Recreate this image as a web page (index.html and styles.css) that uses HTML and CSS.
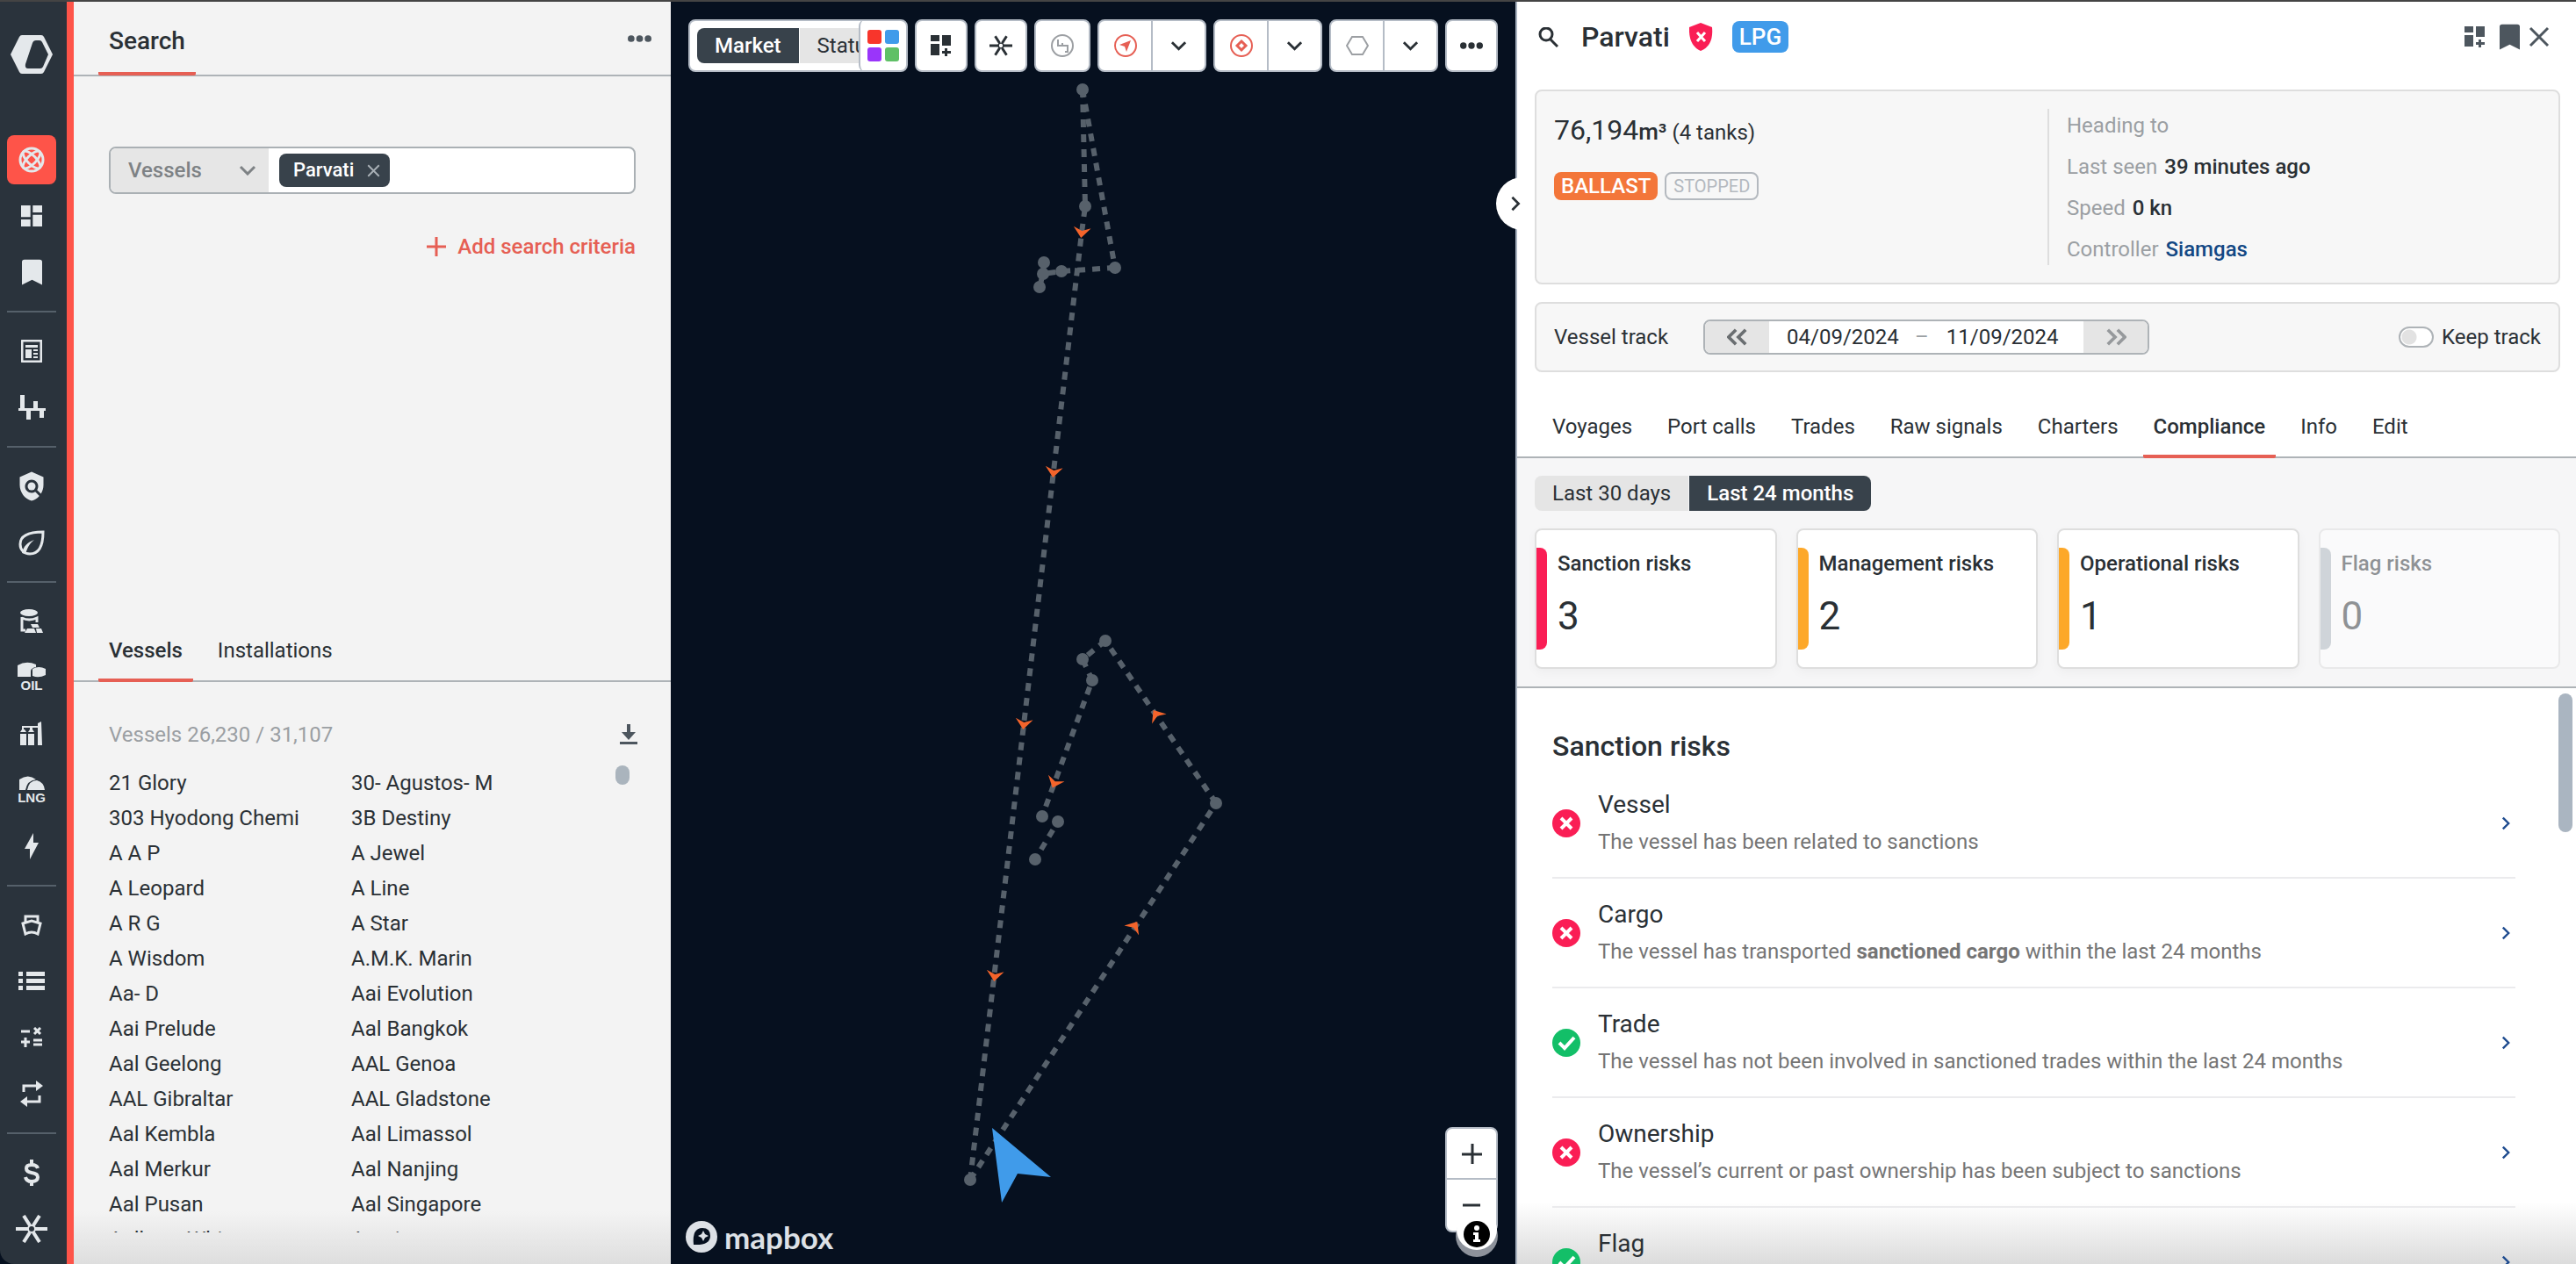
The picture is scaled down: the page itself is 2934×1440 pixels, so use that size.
FILE: index.html
```html
<!DOCTYPE html>
<html lang="en">
<head>
    <meta charset="UTF-8">
    <meta name="viewport" content="width=device-width, initial-scale=1.0">
    <title>Parvati - Compliance</title>
    <link rel="stylesheet" href="styles.css">
</head>
<body>
    <svg class="sprite" aria-hidden="true">
        <symbol id="bookmark" viewBox="0 0 24 30"><path d="M3 0h18a3 3 0 0 1 3 3v27l-12-6-12 6V3a3 3 0 0 1 3-3z"/></symbol>
        <symbol id="grid-plus" viewBox="0 0 24 24"><path d="M0 0h10v7H0zM0 10h10v13H0zM13 0h10v12H13zM16 15h3v3h4v3h-4v3h-3v-3h-3v-3h3z"/></symbol>
        <symbol id="spark" viewBox="0 0 36 32"><path d="M0 16h14M22 16h14M9 1l7 11M27 1l-7 11M9 31l7-11M27 31l-7-11" fill="none" stroke="currentColor" stroke-width="4"/><circle cx="18" cy="16" r="4" fill="none" stroke="currentColor" stroke-width="2"/></symbol>
        <symbol id="chevron-down" viewBox="0 0 20 12"><path d="M2 2l8 8 8-8" fill="none" stroke="currentColor" stroke-width="3"/></symbol>
        <symbol id="chevron-right" viewBox="0 0 12 20"><path d="M2 2l8 8-8 8" fill="none" stroke="currentColor" stroke-width="3"/></symbol>
        <symbol id="chevrons" viewBox="0 0 26 20"><path d="M11 1l-9 9 9 9M23 1l-9 9 9 9" fill="none" stroke="currentColor" stroke-width="4"/></symbol>
        <symbol id="cross" viewBox="0 0 24 24"><path d="M2 2l20 20M22 2L2 22" fill="none" stroke="currentColor" stroke-width="3"/></symbol>
        <symbol id="dots" viewBox="0 0 28 8"><circle cx="4" cy="4" r="4"/><circle cx="14" cy="4" r="4"/><circle cx="24" cy="4" r="4"/></symbol>
        <symbol id="bad" viewBox="0 0 32 32"><circle cx="16" cy="16" r="16" fill="#fa1e55"/><path d="M10 10l12 12M22 10L10 22" stroke="#fff" stroke-width="4"/></symbol>
        <symbol id="good" viewBox="0 0 32 32"><circle cx="16" cy="16" r="16" fill="#13bf68"/><path d="M8 16l6 6L25 10" fill="none" stroke="#fff" stroke-width="4"/></symbol>
        <symbol id="heading" viewBox="-10 -10 20 20"><path d="M-10-6L0 6 10-6 0-2z" fill="#f4642b"/></symbol>
    </svg>

    <div class="app">
        <nav class="rail">
            <a class="logo" href="#" aria-label="Home">
                <svg width="48" height="44" viewBox="0 0 48 44"><path fill-rule="evenodd" d="M13 0h22q2 0 3 2l10 20-10 20q-1 2-3 2H13q-2 0-3-2L0 22 10 2q1-2 3-2zM29 6q-3 0-4 3L17 33q-1 5 3 5h14q2 0 3-2l6-14-7-14q-1-2-3-2z"/></svg>
            </a>
            <button class="rail-btn active" aria-label="Map"><svg width="30" height="30" viewBox="-15 -15 30 30"><g fill="none" stroke="currentColor" stroke-width="3"><circle r="13"/><ellipse rx="13" ry="5" transform="rotate(45)"/><ellipse rx="13" ry="5" transform="rotate(-45)"/></g></svg></button>
            <button class="rail-btn" aria-label="Dashboards"><svg width="32" height="32" viewBox="0 0 24 24"><path d="M3 13h8V3H3v10zm0 8h8v-6H3v6zm10 0h8V11h-8v10zm0-18v6h8V3h-8z"/></svg></button>
            <button class="rail-btn" aria-label="Saved"><svg width="23" height="30"><use href="#bookmark"/></svg></button>
            <hr>
            <button class="rail-btn" aria-label="News"><svg width="24" height="26" viewBox="0 0 24 26"><rect x="1" y="1" width="22" height="24" rx="1" fill="none" stroke="currentColor" stroke-width="3"/><path d="M5 6h14v3H5zM5 11h7v10H5zM14 11h5v2h-5zM14 15h5v2h-5zM14 19h5v2h-5z"/></svg></button>
            <button class="rail-btn" aria-label="Balances"><svg width="31" height="28" viewBox="0 0 31 28"><path d="M2 0h5v15h10V7h5v8h9v3h-2v8h-5v-8H14v10H9V18H0v-3h2z"/></svg></button>
            <hr>
            <button class="rail-btn" aria-label="Risk"><svg width="36" height="36" viewBox="0 0 24 24"><path d="M21 5l-9-4-9 4v6c0 5.55 3.84 10.74 9 12 2.3-.56 4.33-1.9 5.88-3.71l-3.12-3.12c-1.94 1.29-4.58 1.07-6.29-.64-1.95-1.95-1.95-5.12 0-7.07 1.95-1.95 5.12-1.95 7.07 0 1.71 1.71 1.92 4.35.64 6.29l2.9 2.9C20.29 15.69 21 13.38 21 11V5z"/><circle cx="12" cy="12" r="3"/></svg></button>
            <button class="rail-btn" aria-label="Emissions"><svg width="30" height="29" viewBox="0 0 30 29"><path d="M28 2C28 19 23 27 13 27 6 27 2 22 2 16 2 6 12 2 28 2z" fill="none" stroke="currentColor" stroke-width="3"/><path d="M4 26C6 18 10 14 18 11 13 15 11 18 8 27z"/></svg></button>
            <hr>
            <button class="rail-btn" aria-label="Inventories"><svg width="26" height="29" viewBox="0 0 26 29"><ellipse cx="10" cy="4" rx="10" ry="4"/><path d="M2 9v15h4M2 10q8 4 17 0v5" fill="none" stroke="currentColor" stroke-width="3"/><path d="M12 17h8l2 4h-8zM8 22h8l2 5H5zM18 22h6l2 5h-7z"/></svg></button>
            <button class="rail-btn" aria-label="Oil"><svg width="40" height="40" viewBox="-3 -3 40 40"><path d="M1 3Q11-3 22 2v3q-6 1-6 5v6H1zM18 7q7-4 15 0v7q-8 4-15 1z"/><text x="17" y="31" class="rail-text">OIL</text></svg></button>
            <button class="rail-btn" aria-label="Refineries"><svg width="26" height="28" viewBox="0 0 26 28"><path d="M0 14h7v13H0zM9 14h7v13H9zM0 12l2-3h3l2 3zM9 12l2-3h3l2 3zM2 5h18V2l4-2 1 27h-5V7H4v2H2zM11 5h3v4h-3z"/></svg></button>
            <button class="rail-btn" aria-label="LNG"><svg width="40" height="40" viewBox="-3 -4 40 40"><path d="M3 4Q13-3 22 4 12 5 10 16H3zM12 16Q14 5 23 5q8 2 9 11z"/><text x="17" y="30" class="rail-text">LNG</text></svg></button>
            <button class="rail-btn" aria-label="Power"><svg width="16" height="30" viewBox="0 0 16 30"><path d="M10 0v11h6L6 30V18H0z"/></svg></button>
            <hr>
            <button class="rail-btn" aria-label="Fleet"><svg width="24" height="24" viewBox="0 0 24 24"><path d="M5 8V2h14v6M2 10l10-3 10 3-3 12q-7-4-14 0z" fill="none" stroke="currentColor" stroke-width="3"/></svg></button>
            <button class="rail-btn" aria-label="Lists"><svg width="30" height="22" viewBox="0 0 30 22"><path d="M0 0h5v5H0zM0 8h5v5H0zM0 16h5v5H0zM9 0h21v5H9zM9 8h21v5H9zM9 16h21v5H9z"/></svg></button>
            <button class="rail-btn" aria-label="Calculator"><svg width="24" height="24" viewBox="0 0 24 24"><path d="M0 5h10M0 17h10M5 12v11M14 15h10M14 20h10M15 1l7 7M22 1l-7 7" fill="none" stroke="currentColor" stroke-width="3"/></svg></button>
            <button class="rail-btn" aria-label="Flows"><svg width="26" height="30" viewBox="0 0 26 30"><path d="M4 13V6h15M22 17v7H7" fill="none" stroke="currentColor" stroke-width="3"/><path d="M18 0l8 6-8 6zM8 18l-8 6 8 6z"/></svg></button>
            <hr>
            <button class="rail-btn" aria-label="Prices"><svg width="18" height="30" viewBox="0 0 18 30"><path d="M16 10Q15 6 9 6 3 6 3 10q0 4 6 5 7 1 7 5 0 5-7 5-6 0-7-5M9 0v6M9 25v5" fill="none" stroke="currentColor" stroke-width="4"/></svg></button>
            <button class="rail-btn" aria-label="Insight"><svg width="36" height="32"><use href="#spark"/></svg></button>
        </nav>

        <aside class="search">
            <header class="search-header">
                <h2 class="search-title">Search</h2>
                <button class="icon-btn" aria-label="More"><svg width="27" height="8"><use href="#dots"/></svg></button>
            </header>

            <form class="filters">
                <div class="criteria">
                    <div class="select-wrap">
                        <select aria-label="Search type"><option>Vessels</option></select>
                        <svg class="caret" width="20" height="12"><use href="#chevron-down"/></svg>
                    </div>
                    <span class="chip">Parvati <button type="button" class="chip-close" aria-label="Remove Parvati"><svg width="15" height="15"><use href="#cross"/></svg></button></span>
                    <input type="text" class="criteria-input" aria-label="Search value">
                </div>
                <button type="button" class="add"><svg width="22" height="22" viewBox="0 0 22 22"><path d="M11 0v22M0 11h22" stroke="currentColor" stroke-width="3"/></svg>Add search criteria</button>
            </form>

            <section class="results">
                <div class="tabs result-tabs">
                    <button class="tab selected">Vessels</button>
                    <button class="tab">Installations</button>
                </div>
                <div class="count">
                    <span>Vessels 26,230 / 31,107</span>
                    <button class="icon-btn" aria-label="Download"><svg width="20" height="24" viewBox="0 0 20 24"><path d="M8 0h4v9h6l-8 9-8-9h6zM0 20h20v3H0z"/></svg></button>
                </div>
                <div class="list-wrap">
                    <ul class="vessels">
                        <li>21 Glory</li><li>30- Agustos- M</li>
                        <li>303 Hyodong Chemi</li><li>3B Destiny</li>
                        <li>A A P</li><li>A Jewel</li>
                        <li>A Leopard</li><li>A Line</li>
                        <li>A R G</li><li>A Star</li>
                        <li>A Wisdom</li><li>A.M.K. Marin</li>
                        <li>Aa- D</li><li>Aai Evolution</li>
                        <li>Aai Prelude</li><li>Aal Bangkok</li>
                        <li>Aal Geelong</li><li>AAL Genoa</li>
                        <li>AAL Gibraltar</li><li>AAL Gladstone</li>
                        <li>Aal Kembla</li><li>Aal Limassol</li>
                        <li>Aal Merkur</li><li>Aal Nanjing</li>
                        <li>Aal Pusan</li><li>Aal Singapore</li>
                        <li>Aalborg White</li><li>Aamira</li>
                    </ul>
                    <span class="list-thumb"></span>
                </div>
            </section>
        </aside>

        <main class="map">
            <svg class="track" viewBox="764 2 962 1438" preserveAspectRatio="xMidYMid slice">
                <g class="legs">
                    <path d="M1233 102L1236 235 1232 265 1105 1344"/>
                    <path d="M1233 102L1270 305"/>
                    <path d="M1270 305L1209 309 1188 312M1189 299L1188 312 1184 327"/>
                    <path d="M1105 1344L1385 915"/>
                    <path d="M1385 915L1259 730"/>
                    <path d="M1259 730L1233 751 1244 775 1187 930 1205 936 1179 979"/>
                </g>
                <g class="stops">
                    <circle cx="1233" cy="102" r="7"/><circle cx="1236" cy="235" r="7"/>
                    <circle cx="1270" cy="305" r="7"/><circle cx="1209" cy="309" r="7"/>
                    <circle cx="1189" cy="299" r="7"/><circle cx="1188" cy="312" r="7"/>
                    <circle cx="1184" cy="327" r="7"/><circle cx="1259" cy="730" r="7"/>
                    <circle cx="1233" cy="751" r="7"/><circle cx="1244" cy="775" r="7"/>
                    <circle cx="1187" cy="930" r="7"/><circle cx="1205" cy="936" r="7"/>
                    <circle cx="1179" cy="979" r="7"/><circle cx="1385" cy="915" r="7"/>
                    <circle cx="1105" cy="1344" r="7"/>
                </g>
                <use href="#heading" width="20" height="20" transform="translate(1232 265) rotate(7) translate(-10 -10)"/>
                <use href="#heading" width="20" height="20" transform="translate(1200 538) rotate(7) translate(-10 -10)"/>
                <use href="#heading" width="20" height="20" transform="translate(1166 825) rotate(7) translate(-10 -10)"/>
                <use href="#heading" width="20" height="20" transform="translate(1133 1112) rotate(7) translate(-10 -10)"/>
                <use href="#heading" width="20" height="20" transform="translate(1201 892) rotate(22) translate(-10 -10)"/>
                <use href="#heading" width="20" height="20" transform="translate(1317 814) rotate(146) translate(-10 -10)"/>
                <use href="#heading" width="20" height="20" transform="translate(1292 1055) rotate(213) translate(-10 -10)"/>
                <path d="M1130 1285L1197 1341 1159 1337 1141 1370z" fill="#409bea"/>
            </svg>

            <div class="toolbar">
                <div class="tool tool-mode">
                    <div class="mode"><button class="on">Market</button><button>Status</button></div>
                    <button class="palette" aria-label="Colours"><svg width="37" height="37" viewBox="0 0 37 37"><rect width="16" height="16" rx="3" fill="#f8352b"/><rect x="20" width="16" height="16" rx="3" fill="#409bea"/><rect y="20" width="16" height="16" rx="3" fill="#9a35fa"/><rect x="20" y="20" width="16" height="16" rx="3" fill="#5fc066"/></svg></button>
                </div>
                <button class="tool" aria-label="Add widget"><svg width="24" height="24"><use href="#grid-plus"/></svg></button>
                <button class="tool" aria-label="Insight"><svg width="26" height="24"><use href="#spark"/></svg></button>
                <button class="tool tool-wide muted" aria-label="Routes"><svg width="26" height="26" viewBox="0 0 26 26"><g fill="none" stroke="currentColor" stroke-width="2"><circle cx="13" cy="13" r="12"/><path d="M8 6v7h5v-3M13 13h6v7h-3"/></g></svg></button>
                <div class="tool split">
                    <button class="red" aria-label="Vessels"><svg width="26" height="26" viewBox="0 0 26 26"><circle cx="13" cy="13" r="12" fill="none" stroke="currentColor" stroke-width="2"/><path d="M19 7l-5 13-2-6-6-2z"/></svg></button>
                    <button aria-label="Vessel options"><svg width="19" height="12"><use href="#chevron-down"/></svg></button>
                </div>
                <div class="tool split">
                    <button class="red" aria-label="Installations"><svg width="26" height="26" viewBox="0 0 26 26"><g fill="none" stroke="currentColor" stroke-width="2"><circle cx="13" cy="13" r="12"/><path d="M13 8l5 5-5 5-5-5z" stroke-width="3"/></g></svg></button>
                    <button aria-label="Installation options"><svg width="19" height="12"><use href="#chevron-down"/></svg></button>
                </div>
                <div class="tool split">
                    <button class="muted" aria-label="Zones"><svg width="26" height="24" viewBox="0 0 26 24"><path d="M7 2h12l6 10-6 10H7L1 12z" fill="none" stroke="currentColor" stroke-width="2"/></svg></button>
                    <button aria-label="Zone options"><svg width="19" height="12"><use href="#chevron-down"/></svg></button>
                </div>
                <button class="tool" aria-label="More"><svg width="26" height="8"><use href="#dots"/></svg></button>
            </div>

            <div class="map-footer">
                <a class="mapbox" href="#"><svg width="36" height="36" viewBox="0 0 36 36"><circle cx="18" cy="18" r="18"/><path d="M9 27Q7 8 19 8q9 0 9 9 0 11-19 10z" fill="#06101f"/><path d="M20 11l2 4 4 2-4 2-2 4-2-4-4-2 4-2z"/></svg>mapbox</a>
                <div class="zoom">
                    <button aria-label="Zoom in"><svg width="23" height="23" viewBox="0 0 23 23"><path d="M12 0v23M0 12h23" stroke="currentColor" stroke-width="3"/></svg></button>
                    <button aria-label="Zoom out"><svg width="20" height="4" viewBox="0 0 20 4"><path d="M0 2h20" stroke="currentColor" stroke-width="3"/></svg></button>
                    <button class="info" aria-label="Attribution"><svg width="48" height="52" viewBox="0 0 48 52"><circle cx="24" cy="28" r="24" fill="#8d929b"/><circle cx="24" cy="21" r="23" fill="#fff"/><circle cx="24" cy="26" r="15"/><circle cx="24" cy="19" r="3" fill="#fff"/><path d="M20 24h6v8h2v3h-8v-3h2v-5h-2z" fill="#fff"/></svg></button>
                </div>
            </div>
        </main>

        <section class="detail">
            <button class="collapse" aria-label="Collapse panel"><svg width="12" height="18"><use href="#chevron-right"/></svg></button>

            <header class="detail-header">
                <svg width="23" height="23" viewBox="0 0 23 23"><circle cx="9" cy="8" r="7" fill="none" stroke="currentColor" stroke-width="3"/><path d="M13 13l9 9" stroke="currentColor" stroke-width="3"/></svg>
                <h1>Parvati</h1>
                <svg class="shield" width="27" height="32" viewBox="0 0 27 32"><path d="M13 0l13 5q2 21-13 27Q-1 26 0 5z" fill="#fa1e55"/><path d="M9 11l9 10M18 11L9 21" stroke="#fff" stroke-width="3"/></svg>
                <span class="lpg">LPG</span>
                <div class="detail-actions">
                    <button class="icon-btn" aria-label="Add to dashboard"><svg width="24" height="24"><use href="#grid-plus"/></svg></button>
                    <button class="icon-btn" aria-label="Bookmark"><svg width="23" height="30"><use href="#bookmark"/></svg></button>
                    <button class="icon-btn" aria-label="Close"><svg width="24" height="24"><use href="#cross"/></svg></button>
                </div>
            </header>

            <div class="box summary">
                <div class="cargo">
                    <p class="volume">76,194<b>m³</b><span> (4 tanks)</span></p>
                    <p class="badges"><span class="ballast">BALLAST</span><span class="stopped">STOPPED</span></p>
                </div>
                <dl class="facts">
                    <div><dt>Heading to</dt></div>
                    <div><dt>Last seen</dt><dd>39 minutes ago</dd></div>
                    <div><dt>Speed</dt><dd>0 kn</dd></div>
                    <div><dt>Controller</dt><dd><a href="#">Siamgas</a></dd></div>
                </dl>
            </div>

            <div class="box vessel-track">
                <span>Vessel track</span>
                <div class="range">
                    <button aria-label="Previous"><svg width="24" height="20"><use href="#chevrons"/></svg></button>
                    <input type="text" value="04/09/2024" aria-label="From">
                    <span class="dash">–</span>
                    <input type="text" value="11/09/2024" aria-label="To">
                    <button class="next" aria-label="Next"><svg width="24" height="20"><use href="#chevrons"/></svg></button>
                </div>
                <label class="keep"><input type="checkbox">Keep track</label>
            </div>

            <div class="tabs detail-tabs">
                <button class="tab">Voyages</button>
                <button class="tab">Port calls</button>
                <button class="tab">Trades</button>
                <button class="tab">Raw signals</button>
                <button class="tab">Charters</button>
                <button class="tab selected">Compliance</button>
                <button class="tab">Info</button>
                <button class="tab">Edit</button>
            </div>

            <div class="compliance">
                <div class="mode"><button>Last 30 days</button><button class="on">Last 24 months</button></div>
                <div class="cards">
                    <div class="card danger"><h3>Sanction risks</h3><p>3</p></div>
                    <div class="card"><h3>Management risks</h3><p>2</p></div>
                    <div class="card"><h3>Operational risks</h3><p>1</p></div>
                    <div class="card none"><h3>Flag risks</h3><p>0</p></div>
                </div>
            </div>

            <div class="risks">
                <div class="risk-list">
                    <h2>Sanction risks</h2>
                    <a class="risk" href="#"><svg width="32" height="32"><use href="#bad"/></svg><div><h4>Vessel</h4><p>The vessel has been related to sanctions</p></div><svg class="go" width="10" height="16"><use href="#chevron-right"/></svg></a>
                    <a class="risk" href="#"><svg width="32" height="32"><use href="#bad"/></svg><div><h4>Cargo</h4><p>The vessel has transported <b>sanctioned cargo</b> within the last 24 months</p></div><svg class="go" width="10" height="16"><use href="#chevron-right"/></svg></a>
                    <a class="risk" href="#"><svg width="32" height="32"><use href="#good"/></svg><div><h4>Trade</h4><p>The vessel has not been involved in sanctioned trades within the last 24 months</p></div><svg class="go" width="10" height="16"><use href="#chevron-right"/></svg></a>
                    <a class="risk" href="#"><svg width="32" height="32"><use href="#bad"/></svg><div><h4>Ownership</h4><p>The vessel’s current or past ownership has been subject to sanctions</p></div><svg class="go" width="10" height="16"><use href="#chevron-right"/></svg></a>
                    <a class="risk" href="#"><svg width="32" height="32"><use href="#good"/></svg><div><h4>Flag</h4><p>The vessel has not been sailing under a sanctioned flag</p></div><svg class="go" width="10" height="16"><use href="#chevron-right"/></svg></a>
                </div>
                <span class="risk-thumb"></span>
            </div>
        </section>
    </div>
</body>
</html>
```
FILE: styles.css
```css
* {
    box-sizing: border-box;
}
body {
    margin: 0;
    background: #06101f;
    color: #2a3035;
    font-family: Roboto, "Liberation Sans", sans-serif;
    font-size: 24px;
    line-height: 32px;
}
h1, h2, h3, h4, p, ul, dl, dd {
    margin: 0;
    padding: 0;
}
button, input, select {
    border: none;
    padding: 0;
    background: none;
    color: inherit;
    font: inherit;
}
button {
    display: flex;
    align-items: center;
    justify-content: center;
    cursor: pointer;
}
a {
    color: inherit;
    text-decoration: none;
}
svg {
    flex: none;
    fill: currentColor;
}
.sprite {
    position: absolute;
    width: 0;
    height: 0;
}

.app {
    display: grid;
    grid-template-columns: 84px minmax(0, 680fr) minmax(0, 962fr) minmax(0, 1208fr);
    height: 100vh;
    border-top: 2px solid #444444;
    border-bottom-left-radius: 16px;
    overflow: hidden;
}

/* left rail */
.rail {
    display: flex;
    flex-direction: column;
    gap: 8px;
    padding: 38px 12px 0 8px;
    background: #2a333c;
    border-right: 8px solid #fe5449;
    color: #e4e8eb;
}
.logo {
    display: flex;
    justify-content: center;
    margin-bottom: 62px;
}
.rail-btn {
    flex: none;
    width: 56px;
    height: 56px;
    border-radius: 8px;
}
.rail-btn.active {
    background: #fe5449;
}
.rail hr {
    width: 56px;
    height: 2px;
    margin: 8px 0;
    border: none;
    background: #55606a;
}
.rail-text {
    font: bold 15px "Liberation Sans", sans-serif;
    text-anchor: middle;
}

/* search panel */
.search {
    display: grid;
    grid-template-columns: minmax(0, 1fr);
    grid-template-rows: auto 622fr 731fr;
    background: linear-gradient(#f3f3f3 calc(100% - 60px), #dedede);
    min-height: 0;
}
.search-header {
    display: flex;
    justify-content: space-between;
    align-items: center;
    height: 85px;
    padding: 0 22px 0 28px;
    border-bottom: 2px solid #aeb3b7;
}
.search-title {
    height: 85px;
    padding: 0 12px;
    border-bottom: 4px solid #e65f54;
    border-radius: 2px;
    font-size: 28px;
    font-weight: 500;
    line-height: 92px;
}
.icon-btn {
    color: #4d565e;
}
.filters {
    display: flex;
    flex-direction: column;
    align-items: flex-end;
    gap: 44px;
    padding: 80px 40px 0;
}
.criteria {
    display: flex;
    align-items: center;
    width: 100%;
    height: 54px;
    border: 2px solid #aab0b4;
    border-radius: 8px;
    background: #ffffff;
    overflow: hidden;
}
.select-wrap {
    display: grid;
    align-items: center;
    flex: none;
    width: 180px;
    height: 100%;
    background: #e6e6e6;
    color: #7e8285;
    font-weight: 500;
}
.select-wrap select {
    grid-area: 1 / 1;
    height: 100%;
    padding-left: 20px;
    appearance: none;
}
.caret {
    grid-area: 1 / 1;
    justify-self: end;
    margin-right: 14px;
    pointer-events: none;
}
.chip {
    display: flex;
    align-items: center;
    gap: 15px;
    height: 38px;
    margin-left: 12px;
    padding: 0 11px 0 16px;
    border-radius: 8px;
    background: #38424b;
    color: #ffffff;
    font-size: 22px;
    font-weight: 500;
}
.chip-close {
    color: #a9b0b6;
}
.criteria-input {
    flex: 1;
    min-width: 0;
    height: 100%;
    padding: 0 12px;
}
.add {
    gap: 13px;
    color: #e65f54;
    font-weight: 500;
}

.tabs {
    display: flex;
    border-bottom: 2px solid #aeb3b7;
}
.tab {
    height: 68px;
    margin-bottom: -2px;
    padding: 0 12px;
    border-bottom: 4px solid transparent;
    border-radius: 2px;
}
.tab.selected {
    border-bottom-color: #e65f54;
    font-weight: 500;
}
.results {
    display: flex;
    flex-direction: column;
    min-height: 0;
    padding-bottom: 36px;
}
.result-tabs {
    flex: none;
    gap: 16px;
    padding: 0 28px;
}
.count {
    display: flex;
    justify-content: space-between;
    padding: 44px 38px 19px 40px;
    color: #9b9fa3;
}
.list-wrap {
    display: flex;
    flex: 1;
    min-height: 0;
    padding: 0 47px 0 40px;
    overflow: hidden;
}
.vessels {
    display: grid;
    flex: 1;
    grid-template-columns: 276px 1fr;
    grid-auto-rows: 40px;
    line-height: 40px;
    list-style: none;
}
.list-thumb {
    width: 16px;
    height: 22px;
    border-radius: 8px;
    background: #aab4bd;
}

/* map */
.map {
    position: relative;
    display: flex;
    flex-direction: column;
    justify-content: space-between;
    padding: 20px;
    background: #06101f;
}
.track {
    position: absolute;
    inset: 0;
    width: 100%;
    height: 100%;
}
.legs {
    fill: none;
    stroke: #57616b;
    stroke-width: 6;
    stroke-dasharray: 9 8;
}
.stops {
    fill: #57616b;
}
.toolbar {
    position: relative;
    display: flex;
    gap: 8px;
}
.tool {
    flex: none;
    width: 60px;
    height: 60px;
    border: 2px solid #b5bcc6;
    border-radius: 8px;
    background: #ffffff;
}
.tool-wide {
    width: 64px;
}
.tool-mode {
    display: flex;
    flex: 1;
    width: auto;
    min-width: 0;
    padding-left: 8px;
    overflow: hidden;
    align-items: center;
}
.tool-mode .mode {
    flex: 1;
    min-width: 0;
    overflow: hidden;
}
.palette {
    flex: none;
    width: 54px;
    height: 60px;
    border-left: 2px solid #b5bcc6;
    border-radius: 8px 0 0 8px;
}
.mode {
    display: flex;
    gap: 1px;
}
.mode button {
    flex: none;
    height: 40px;
    padding: 0 20px;
    background: #e5e5e5;
}
.mode button:first-child {
    border-radius: 8px 0 0 8px;
}
.mode button:last-child {
    border-radius: 0 8px 8px 0;
}
.mode .on {
    background: #38424b;
    color: #ffffff;
    font-weight: 500;
}
.split {
    display: flex;
    width: 124px;
}
.split button {
    flex: 1;
}
.split button:first-child {
    border-right: 2px solid #b5bcc6;
}
.muted {
    color: #9c9fa3;
}
.red {
    color: #e65f54;
}
.map-footer {
    position: relative;
    display: flex;
    justify-content: space-between;
    align-items: flex-end;
}
.mapbox {
    display: flex;
    align-items: center;
    gap: 8px;
    height: 22px;
    margin-left: -3px;
    color: #dde1e6;
    font-family: Lato, sans-serif;
    font-size: 35px;
    font-weight: bold;
}
.zoom {
    position: relative;
    width: 60px;
    margin-bottom: 16px;
    border: 2px solid #b5bcc6;
    border-radius: 8px;
    background: #ffffff;
}
.zoom button {
    width: 100%;
    height: 58px;
}
.zoom button:first-child {
    border-bottom: 2px solid #b5bcc6;
}
.zoom .info {
    position: absolute;
    right: -2px;
    bottom: -30px;
    width: 48px;
    height: 52px;
    color: #000000;
}

/* detail panel */
.detail {
    position: relative;
    display: flex;
    flex-direction: column;
    min-height: 0;
    border-left: 2px solid #a8b2bf;
    background: #ffffff;
}
.collapse {
    position: absolute;
    top: 200px;
    left: -24px;
    width: 44px;
    height: 60px;
    border-radius: 30px 0 0 30px;
    background: #ffffff;
}
.detail-header {
    display: flex;
    align-items: center;
    height: 80px;
    padding: 0 30px 0 24px;
}
.detail-header h1 {
    margin-left: 26px;
    font-size: 32px;
    font-weight: 500;
}
.shield {
    margin: 0 22px;
}
.lpg {
    padding: 2px 8px;
    border-radius: 8px;
    background: #409bea;
    color: #ffffff;
    font-size: 26px;
    font-weight: 500;
}
.detail-actions {
    display: flex;
    align-items: center;
    gap: 10px;
    margin-left: auto;
}
.detail-actions button:first-child {
    margin-right: 6px;
}
.box {
    display: flex;
    margin: 20px 18px 0 20px;
    border: 2px solid #dedede;
    border-radius: 8px;
    background: #f7f7f7;
}
.summary {
    display: grid;
    grid-template-columns: 1fr 1fr;
    padding: 20px;
}
.volume {
    padding-top: 8px;
    font-size: 32px;
}
.volume b {
    font-size: 26px;
    font-weight: 500;
}
.volume span {
    font-size: 24px;
}
.badges {
    display: flex;
    gap: 8px;
    margin-top: 29px;
}
.ballast, .stopped {
    padding: 0 8px;
    border-radius: 8px;
    background: #f3763a;
    color: #ffffff;
    font-weight: 500;
}
.stopped {
    border: 2px solid #b4b9bf;
    background: none;
    color: #b4b9bf;
    font-size: 20px;
    font-weight: 400;
    line-height: 28px;
}
.facts {
    display: flex;
    flex-direction: column;
    gap: 15px;
    padding: 3px 0 2px 20px;
    border-left: 2px solid #dedede;
}
.facts div {
    display: flex;
    gap: 8px;
}
.facts dt {
    color: #9b9fa3;
}
.facts dd {
    font-weight: 500;
}
.facts a {
    color: #134884;
}
.vessel-track {
    align-items: center;
    height: 80px;
    padding: 0 20px;
}
.range {
    display: flex;
    align-items: center;
    width: 508px;
    height: 40px;
    margin-left: 40px;
    border: 2px solid #aeb3b7;
    border-radius: 8px;
    background: #ffffff;
    overflow: hidden;
}
.range button {
    flex: none;
    width: 73px;
    height: 100%;
    background: #e5e5e5;
    color: #6a6e71;
}
.range input {
    width: 166px;
    padding-left: 20px;
}
.range .next {
    margin-left: auto;
    color: #96999c;
}
.range .next svg {
    transform: scaleX(-1);
}
.dash {
    color: #9b9fa3;
}
.keep {
    display: flex;
    align-items: center;
    gap: 9px;
    margin-left: auto;
}
.keep input {
    appearance: none;
    width: 40px;
    height: 24px;
    margin: 0;
    border: 2px solid #aeb3b7;
    border-radius: 12px;
    background: radial-gradient(circle at 10px 10px, #e2e2e2 8px, #ffffff 9px);
}
.detail-tabs {
    gap: 16px;
    margin-top: 30px;
    padding: 0 28px;
}
.compliance {
    padding: 20px 18px 20px 20px;
    border-bottom: 2px solid #aeb3b7;
    background: #f6f6f7;
}
.cards {
    display: grid;
    grid-template-columns: repeat(4, 1fr);
    gap: 22px;
    margin-top: 20px;
}
.card {
    display: grid;
    grid-template-columns: 12px 1fr;
    grid-template-rows: 40px 1fr;
    column-gap: 12px;
    height: 160px;
    padding: 20px 0;
    border: 2px solid #dedede;
    border-radius: 8px;
    background: #ffffff;
    box-shadow: 0 4px 12px rgba(0, 0, 0, 0.04);
}
.card::before {
    content: "";
    grid-row: 1 / 3;
    border-radius: 0 8px 8px 0;
    background: #fda829;
}
.card.danger::before {
    background: #fa1e55;
}
.card.none {
    opacity: 0.5;
    box-shadow: none;
}
.card.none::before {
    background: #aab4bd;
}
.card h3 {
    font-size: 24px;
    font-weight: 500;
    line-height: 36px;
}
.card p {
    font-size: 44px;
    line-height: 76px;
}
.risks {
    display: flex;
    justify-content: space-between;
    flex: 1;
    min-height: 0;
    padding: 0 4px 0 40px;
    overflow: hidden;
    background: linear-gradient(#ffffff calc(100% - 70px), #dcdcdc);
}
.risk-list {
    flex: 1;
    margin-right: 49px;
}
.risk-list h2 {
    padding: 46px 0 6px;
    font-size: 32px;
    font-weight: 500;
    line-height: 40px;
}
.risk {
    display: flex;
    align-items: center;
    gap: 20px;
    height: 125px;
    border-bottom: 2px solid #ebebed;
}
.risk h4 {
    margin-bottom: 10px;
    font-size: 28px;
    font-weight: 400;
}
.risk p {
    color: #757575;
}
.go {
    margin: 0 6px 0 auto;
    color: #1e4b8f;
}
.risk-thumb {
    width: 16px;
    height: 158px;
    margin-top: 6px;
    border-radius: 8px;
    background: #aab5c1;
}
```
